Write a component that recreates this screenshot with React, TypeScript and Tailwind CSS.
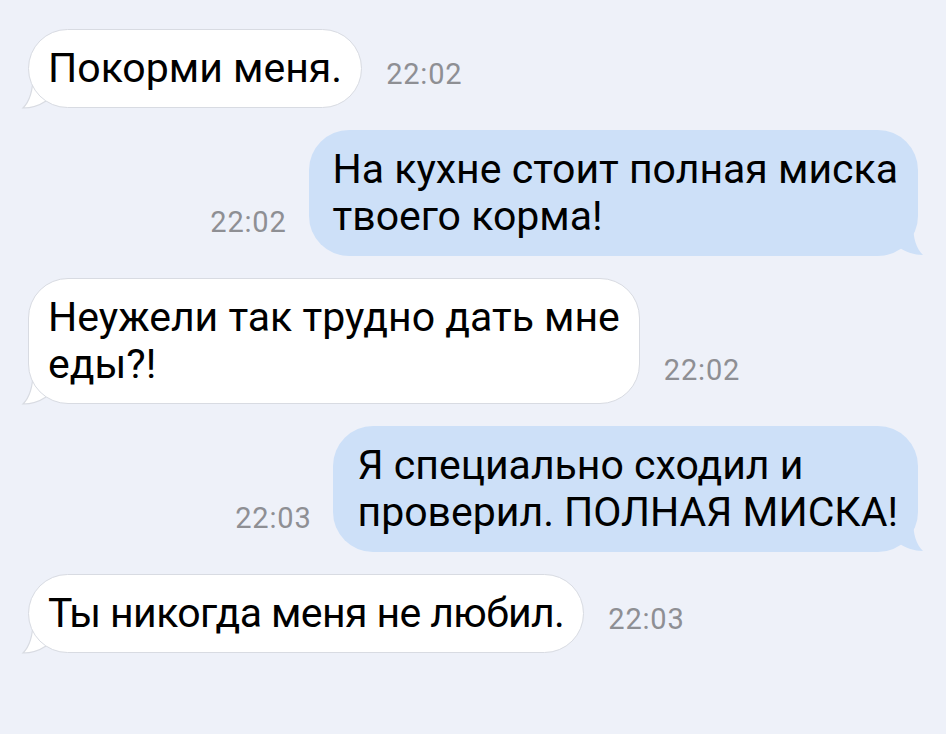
import React from "react";

type Msg = { side: "in" | "out"; lines: string[]; time: string; tight?: boolean };

const messages: Msg[] = [
  { side: "in", lines: ["Покорми меня."], time: "22:02" },
  { side: "out", lines: ["На кухне стоит полная миска", "твоего корма!"], time: "22:02" },
  { side: "in", lines: ["Неужели так трудно дать мне", "еды?!"], time: "22:02" },
  { side: "out", lines: ["Я специально сходил и", "проверил. ПОЛНАЯ МИСКА!"], time: "22:03" },
  { side: "in", lines: ["Ты никогда меня не любил."], time: "22:03", tight: true },
];

function TailIn() {
  return (
    <svg
      className="absolute -left-[8px] bottom-[-1px]"
      width="30"
      height="34"
      viewBox="0 0 30 34"
    >
      <path
        d="M13 0 C13 16 10 26 3 33 C12 33 20 30 26 26 L30 26 L30 0 Z"
        fill="#ffffff"
      />
      <path
        d="M13 0 C13 16 10 26 3 33 C12 33 20 30 26 26"
        fill="none"
        stroke="#d8dbe2"
        strokeWidth="1.2"
      />
    </svg>
  );
}

function TailOut() {
  return (
    <svg
      className="absolute -right-[8px] bottom-0"
      width="30"
      height="34"
      viewBox="0 0 30 34"
    >
      <path
        d="M17 0 C17 16 20 26 27 33 C18 33 10 30 4 26 L0 26 L0 0 Z"
        fill="#cde0f8"
      />
    </svg>
  );
}

function Bubble({ msg }: { msg: Msg }) {
  const isIn = msg.side === "in";
  return (
    <div className="relative">
      {isIn ? <TailIn /> : <TailOut />}
      <div
        className={
          isIn
            ? "relative rounded-[40px] border border-[#d8dbe2] bg-white px-[19px] py-[15px]"
            : "relative rounded-[40px] bg-[#cde0f8] pl-[24px] pr-[20px] py-[16px]"
        }
      >
        {msg.lines.map((l, i) => (
          <div
            key={i}
            className={
              msg.tight
                ? "whitespace-nowrap text-[41px] leading-[47px] tracking-[-0.6px] text-black"
                : "whitespace-nowrap text-[41px] leading-[47px] text-black"
            }
          >
            {l}
          </div>
        ))}
      </div>
    </div>
  );
}

function Time({ t }: { t: string }) {
  return (
    <div className="mb-[19px] text-[29px] leading-[30px] tracking-[0.8px] text-[#8e8f94]">{t}</div>
  );
}

export default function App() {
  return (
    <div
      className="flex h-[734px] w-[946px] flex-col gap-[22px] overflow-hidden bg-[#eef1f9] pl-[28px] pr-[28px] pt-[29px]"
      style={{ fontFamily: "Roboto, 'Noto Sans', sans-serif" }}
    >
      {messages.map((m, i) =>
        m.side === "in" ? (
          <div key={i} className="flex items-end gap-[24px]">
            <Bubble msg={m} />
            <Time t={m.time} />
          </div>
        ) : (
          <div key={i} className="flex items-end justify-end gap-[22px]">
            <Time t={m.time} />
            <Bubble msg={m} />
          </div>
        )
      )}
    </div>
  );
}
